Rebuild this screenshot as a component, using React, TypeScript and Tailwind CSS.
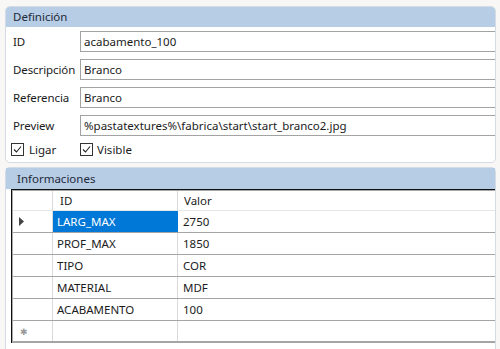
export default function App() {
    const fields = [
        { label: 'ID', value: 'acabamento_100' },
        { label: 'Descripción', value: 'Branco' },
        { label: 'Referencia', value: 'Branco' },
        { label: 'Preview', value: '%pastatextures%\\fabrica\\start\\start_branco2.jpg' },
    ];

    const rows = [
        { id: 'LARG_MAX', valor: '2750', selected: true },
        { id: 'PROF_MAX', valor: '1850' },
        { id: 'TIPO', valor: 'COR' },
        { id: 'MATERIAL', valor: 'MDF' },
        { id: 'ACABAMENTO', valor: '100' },
    ];

    return (
        <div className="w-[500px] h-[349px] overflow-hidden bg-[#f8f7f5] font-['Noto_Sans',sans-serif] text-[11.5px] text-[#1b1b1b] pt-[6px]">
            {/* Definición */}
            <div className="ml-[5px] w-[491px] h-[157px] rounded-[5px] border border-[#d3dbe4] bg-white overflow-hidden">
                <div className="h-[20px] bg-[#b7cce5] pl-[7px] leading-[20px] text-[#1e2a38]">Definición</div>
                <div className="pt-[4px] flex flex-col gap-[7px]">
                    {fields.map((f) => (
                        <div key={f.label} className="flex items-center h-[21px]">
                            <span className="w-[74px] pl-[7px] shrink-0 tracking-[-0.1px]">{f.label}</span>
                            <div className="flex-1 h-[21px] border-y border-l border-[#a3a3a3] pl-[3px] leading-[19px] whitespace-nowrap overflow-hidden">
                                {f.value}
                            </div>
                        </div>
                    ))}
                    <div className="flex items-center h-[13px] pl-[5px]">
                        <label className="flex items-center gap-[5px] w-[69px]">
                            <CheckBox />
                            <span>Ligar</span>
                        </label>
                        <label className="flex items-center gap-[4px]">
                            <CheckBox />
                            <span>Visible</span>
                        </label>
                    </div>
                </div>
            </div>

            {/* Informaciones */}
            <div className="ml-[5px] mt-[4px] w-[491px] h-[200px] rounded-t-[5px] border-x border-t border-[#d3dbe4] bg-white">
                <div className="h-[21px] bg-[#b7cce5] pl-[11px] leading-[21px] text-[#1e2a38]">Informaciones</div>
                <div className="ml-[5px] border-t border-l border-[#111] h-[154px]">
                    <div className="border-t border-l border-[#a8a8a8] h-full">
                        {/* header */}
                        <div className="flex h-[20px] border-b border-[#e6e6e6]">
                            <div className="w-[40px] border-r border-[#d9d9d9]" />
                            <div className="w-[125px] border-r border-[#d9d9d9] pl-[7px] leading-[20px]">ID</div>
                            <div className="flex-1 pl-[6px] leading-[20px]">Valor</div>
                        </div>
                        {rows.map((r) => (
                            <div key={r.id} className="flex h-[22px] border-b border-[#a5a5a5]">
                                <div className="w-[40px] border-r border-[#d9d9d9] flex items-center pl-[6px]">
                                    {r.selected && (
                                        <svg width="5" height="9" viewBox="0 0 5 9">
                                            <path d="M0 0 L5 4.5 L0 9 Z" fill="#444" />
                                        </svg>
                                    )}
                                </div>
                                <div
                                    className={
                                        r.selected
                                            ? 'w-[125px] bg-[#0078d7] text-white pl-[4px] leading-[21px]'
                                            : 'w-[125px] border-r border-[#d9d9d9] pl-[4px] leading-[21px]'
                                    }
                                >
                                    {r.id}
                                </div>
                                <div className="flex-1 pl-[5px] leading-[21px]">{r.valor}</div>
                            </div>
                        ))}
                        <div className="flex h-[22px] border-b-2 border-[#a5a5a5]">
                            <div className="w-[40px] border-r border-[#d9d9d9] pl-[7px] text-[#999] leading-[22px] text-[9px]">✱</div>
                            <div className="w-[125px] border-r border-[#d9d9d9]" />
                            <div className="flex-1" />
                        </div>
                    </div>
                </div>
            </div>
        </div>
    );
}

function CheckBox() {
    return (
        <span className="w-[13px] h-[13px] border border-[#333] bg-white flex items-center justify-center">
            <svg width="11" height="11" viewBox="0 0 11 11">
                <path d="M2 5.5 L4.5 8 L9 2.5" fill="none" stroke="#222" strokeWidth="1.1" />
            </svg>
        </span>
    );
}
